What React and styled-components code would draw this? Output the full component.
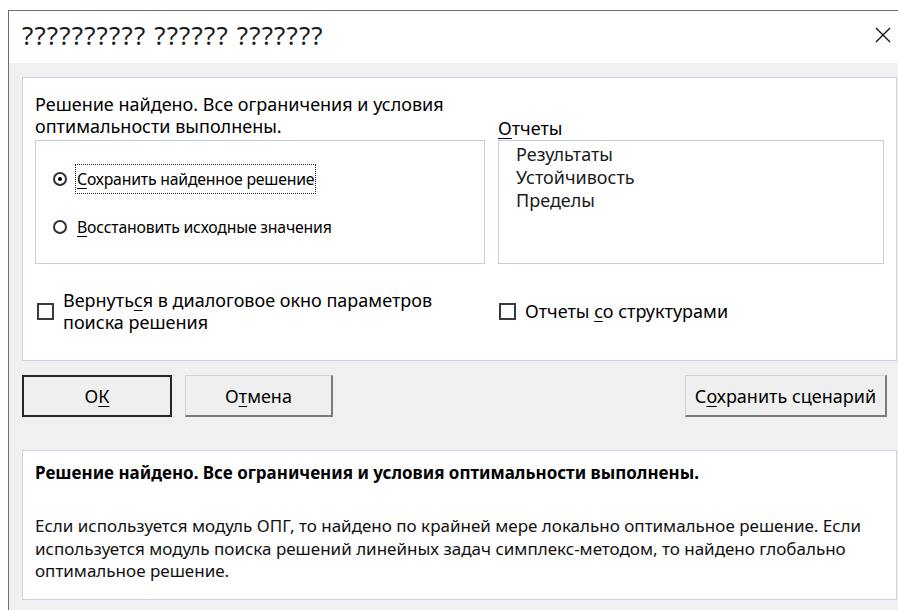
import React from 'react';
import styled, { createGlobalStyle } from 'styled-components';

const GlobalStyle = createGlobalStyle`
  html, body {
    margin: 0;
    padding: 0;
    background: #ffffff;
    overflow: hidden;
  }

  body {
    font-family: "Noto Sans", "Open Sans", sans-serif;
    color: #000000;
  }
`;

const Page = styled.div`
  width: 898px;
  height: 610px;
  overflow: hidden;
  padding: 10px 0 0 8px;
  box-sizing: border-box;
`;

const Window = styled.div`
  width: 901px;
  border-top: 1px solid #6f6f6f;
  border-left: 1px solid #6f6f6f;
  background: #f0f0f0;
`;

const TitleBar = styled.div`
  height: 52px;
  box-sizing: border-box;
  background: #ffffff;
  display: flex;
  align-items: center;
  justify-content: space-between;
  padding: 0 19px 5px 13px;
`;

const Title = styled.span`
  font-size: 26px;
  letter-spacing: 1.15px;
  color: #1b1b1b;
`;

const CloseButton = styled.button`
  width: 17px;
  height: 17px;
  padding: 0;
  border: none;
  background: none;
  display: flex;
  align-items: center;
  justify-content: center;
`;

const Body = styled.div`
  padding: 14px 13px 10px 13px;
`;

const Panel = styled.div`
  background: #ffffff;
  border: 1px solid #c9d5e4;
`;

const OptionsPanel = styled(Panel)`
  display: grid;
  grid-template-columns: 450px 386px;
  column-gap: 13px;
  padding: 15px 10px 27px 12px;
`;

const Label = styled.div`
  font-size: 18px;
  line-height: 22px;
  white-space: nowrap;
  align-self: end;
  margin-bottom: ${(p) => p.$gap || 0}px;
`;

const GroupBox = styled.div`
  height: 124px;
  box-sizing: border-box;
  border: 1px solid #c2cfe0;
  padding: 23px 0 0 17px;
  display: flex;
  flex-direction: column;
  gap: 18px;
`;

const RadioRow = styled.label`
  display: flex;
  align-items: center;
  gap: 8px;
  height: 30px;
`;

const RadioDot = styled.span`
  width: 10px;
  height: 10px;
  border: 2px solid #333333;
  border-radius: 50%;
  background: #ffffff;
  display: flex;
  align-items: center;
  justify-content: center;

  &::after {
    content: '';
    width: 4px;
    height: 4px;
    border-radius: 50%;
    background: ${(p) => (p.$checked ? '#000000' : 'transparent')};
  }
`;

const RadioText = styled.span`
  font-size: 15.8px;
  line-height: 20px;
  letter-spacing: -0.2px;
  padding: 4px 1px;
  border: 1px dotted ${(p) => (p.$focused ? '#222222' : 'transparent')};
  white-space: nowrap;
`;

const ListBox = styled.div`
  height: 124px;
  box-sizing: border-box;
  border: 1px solid #c2cfe0;
  padding: 2px 0 0 17px;
`;

const ListItem = styled.div`
  font-size: 18px;
  line-height: 23px;
  color: #1a1a1a;
`;

const CheckRow = styled.label`
  display: flex;
  align-items: center;
  gap: 9px;
  margin-top: 25px;
  padding-left: ${(p) => p.$indent || 0}px;
`;

const CheckBox = styled.span`
  flex: none;
  width: 13px;
  height: 13px;
  border: 2px solid #3a3a3a;
  background: #ffffff;
`;

const CheckText = styled.span`
  font-size: 18px;
  line-height: 22px;
  white-space: nowrap;
`;

const ButtonRow = styled.div`
  display: flex;
  gap: 13px;
  margin-top: 14px;
  padding-right: 10px;
`;

const Button = styled.button`
  height: 42px;
  width: ${(p) => p.$width}px;
  font-family: inherit;
  font-size: 18px;
  color: #000000;
  background: #efefef;
  box-sizing: border-box;
  border-top: 1px solid #d2d2d2;
  border-left: 1px solid #d2d2d2;
  border-right: 2px solid #7c7c7c;
  border-bottom: 2px solid #7c7c7c;
  padding: 0;
  margin-left: ${(p) => (p.$push ? 'auto' : '0')};

  ${(p) =>
    p.$primary &&
    `
    border: 2px solid #262626;
  `}
`;

const Key = styled.u`
  text-decoration-thickness: 1px;
  text-underline-offset: 3px;
`;

const MessagePanel = styled(Panel)`
  margin-top: 33px;
  height: 150px;
  box-sizing: border-box;
  padding: 11px 13px 0 12px;
`;

const MessageTitle = styled.div`
  font-size: 17px;
  font-weight: 700;
  line-height: 22px;
  white-space: nowrap;
`;

const MessageText = styled.div`
  margin-top: 31px;
  font-size: 17px;
  line-height: 22.5px;
  white-space: nowrap;
  color: #111111;
`;

function CloseIcon() {
  return (
    <svg width="16" height="16" viewBox="0 0 16 16">
      <path d="M1 1 L15 15 M15 1 L1 15" stroke="#111" strokeWidth="1.4" fill="none" />
    </svg>
  );
}

export default function App() {
  return (
    <>
      <GlobalStyle />
      <Page>
        <Window>
          <TitleBar>
            <Title>?????????? ?????? ???????</Title>
            <CloseButton aria-label="Закрыть">
              <CloseIcon />
            </CloseButton>
          </TitleBar>

          <Body>
            <OptionsPanel>
              <Label $gap={3}>
                Решение найдено. Все ограничения и условия
                <br />
                оптимальности выполнены.
              </Label>
              <Label $gap={1}>
                <Key>О</Key>тчеты
              </Label>

              <GroupBox>
                <RadioRow>
                  <RadioDot $checked />
                  <RadioText $focused>
                    <Key>С</Key>охранить найденное решение
                  </RadioText>
                </RadioRow>
                <RadioRow>
                  <RadioDot />
                  <RadioText>
                    <Key>В</Key>осстановить исходные значения
                  </RadioText>
                </RadioRow>
              </GroupBox>

              <ListBox>
                <ListItem>Результаты</ListItem>
                <ListItem>Устойчивость</ListItem>
                <ListItem>Пределы</ListItem>
              </ListBox>

              <CheckRow $indent={2}>
                <CheckBox />
                <CheckText>
                  Вернуть<Key>с</Key>я в диалоговое окно параметров
                  <br />
                  поиска решения
                </CheckText>
              </CheckRow>
              <CheckRow $indent={1}>
                <CheckBox />
                <CheckText>
                  Отчеты <Key>с</Key>о структурами
                </CheckText>
              </CheckRow>
            </OptionsPanel>

            <ButtonRow>
              <Button $primary $width={150}>
                О<Key>К</Key>
              </Button>
              <Button $width={148}>
                О<Key>т</Key>мена
              </Button>
              <Button $push $width={202}>
                С<Key>о</Key>хранить сценарий
              </Button>
            </ButtonRow>

            <MessagePanel>
              <MessageTitle>Решение найдено. Все ограничения и условия оптимальности выполнены.</MessageTitle>
              <MessageText>
                Если используется модуль ОПГ, то найдено по крайней мере локально оптимальное решение. Если
                <br />
                используется модуль поиска решений линейных задач симплекс-методом, то найдено глобально
                <br />
                оптимальное решение.
              </MessageText>
            </MessagePanel>
          </Body>
        </Window>
      </Page>
    </>
  );
}
